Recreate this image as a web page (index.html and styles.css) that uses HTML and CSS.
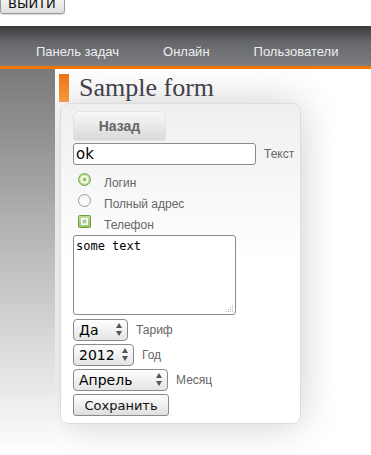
FILE: index.html
```html
<!DOCTYPE html>
<html lang="ru">
<head>
<meta charset="utf-8">
<title>Sample form</title>
<link rel="stylesheet" href="styles.css">
</head>
<body>
<div class="top"><button class="logout" type="button">ВЫЙТИ</button></div>
<nav class="nav">
  <a class="nav-item">Панель задач</a>
  <a class="nav-item">Онлайн</a>
  <a class="nav-item">Пользователи</a>
</nav>
<div class="content">
  <aside class="side"></aside>
  <main class="main">
    <h1 class="title"><span class="marker"></span><span class="title-text">Sample form</span></h1>
    <form class="panel">
      <button class="back" type="button">Назад</button>
      <div class="row"><input class="text" type="text" value="ok"><label class="lbl">Текст</label></div>
      <div class="opts">
        <div class="opt">
          <svg class="ico" width="13" height="13" viewBox="0 0 13 13"><circle cx="6.5" cy="6.5" r="6" fill="#b4d78c" stroke="#7fa85a"/><circle cx="6.5" cy="6.5" r="3.4" fill="#e3f2d3" stroke="#fbfff6" stroke-width="1.3"/><circle cx="6.5" cy="6.5" r="1.7" fill="#8fc060"/></svg>
          <span class="olbl">Логин</span>
        </div>
        <div class="opt">
          <svg class="ico" width="13" height="13" viewBox="0 0 13 13"><defs><linearGradient id="rg" x1="0" y1="0" x2="0" y2="1"><stop offset="0" stop-color="#f4f4f4"/><stop offset="1" stop-color="#ffffff"/></linearGradient></defs><circle cx="6.5" cy="6.5" r="6" fill="url(#rg)" stroke="#9a9a9a"/></svg>
          <span class="olbl">Полный адрес</span>
        </div>
        <div class="opt">
          <svg class="ico" width="13" height="13" viewBox="0 0 13 13"><defs><linearGradient id="cg" x1="0" y1="0" x2="0" y2="1"><stop offset="0" stop-color="#bfe09c"/><stop offset="1" stop-color="#95c667"/></linearGradient></defs><rect x="0.5" y="0.5" width="12" height="12" rx="1" fill="url(#cg)" stroke="#719c47"/><rect x="3.5" y="3.5" width="6" height="6" fill="#f4faee" stroke="#ffffff"/><path d="M4.8 4.8 L8.2 8.2 M8.2 4.8 L4.8 8.2" stroke="#9aa88c" stroke-width="1.2"/></svg>
          <span class="olbl">Телефон</span>
        </div>
      </div>
      <div class="ta-wrap">
        <textarea class="ta">some text</textarea>
        <svg class="grip" width="9" height="9" viewBox="0 0 9 9"><g fill="#b8b8b8"><rect x="7" y="1" width="1" height="1"/><rect x="5" y="3" width="1" height="1"/><rect x="7" y="3" width="1" height="1"/><rect x="3" y="5" width="1" height="1"/><rect x="5" y="5" width="1" height="1"/><rect x="7" y="5" width="1" height="1"/><rect x="1" y="7" width="1" height="1"/><rect x="3" y="7" width="1" height="1"/><rect x="5" y="7" width="1" height="1"/><rect x="7" y="7" width="1" height="1"/></g></svg>
      </div>
      <div class="row srow">
        <span class="sel sel-yes"><select class="sel-box"><option>Да</option></select><svg class="arr" width="6" height="13" viewBox="0 0 6 13"><path d="M0 5 L3 0 L6 5 Z M0 8 L3 13 L6 8 Z" fill="#555"/></svg></span>
        <label class="lbl">Тариф</label>
      </div>
      <div class="row srow">
        <span class="sel sel-year"><select class="sel-box"><option>2012</option></select><svg class="arr" width="6" height="13" viewBox="0 0 6 13"><path d="M0 5 L3 0 L6 5 Z M0 8 L3 13 L6 8 Z" fill="#555"/></svg></span>
        <label class="lbl">Год</label>
      </div>
      <div class="row srow">
        <span class="sel sel-month"><select class="sel-box"><option>Апрель</option></select><svg class="arr" width="6" height="13" viewBox="0 0 6 13"><path d="M0 5 L3 0 L6 5 Z M0 8 L3 13 L6 8 Z" fill="#555"/></svg></span>
        <label class="lbl">Месяц</label>
      </div>
      <button class="save" type="button">Сохранить</button>
    </form>
  </main>
</div>
</body>
</html>
```
FILE: styles.css
```css
html, body {
  margin: 0;
  padding: 0;
  background: #fff;
}
body {
  width: 371px;
  height: 455px;
  overflow: hidden;
  font-family: "Liberation Sans", Arial, sans-serif;
}
.top {
  display: flow-root;
  height: 14px;
}
.logout {
  display: block;
  margin: -8px 0 0 0;
  width: 65px;
  height: 22px;
  padding: 0 0 0 7px;
  text-align: left;
  font-family: "DejaVu Sans", sans-serif;
  font-size: 13px;
  color: #111;
  background: linear-gradient(#ffffff, #dedede);
  border: 1px solid #9a9a9a;
  border-radius: 3px;
  box-shadow: 0 1px 1px rgba(0,0,0,0.15);
}
.nav {
  margin-top: 12px;
  height: 43px;
  box-sizing: border-box;
  padding: 18px 0 0 36px;
  display: flex;
  gap: 44px;
  background: linear-gradient(#3b3b3e, #66676b 40%, #7d7e82);
  border-bottom: 3px solid #f07800;
}
.nav-item {
  font-size: 13px;
  line-height: 15px;
  color: #eeeef2;
}
.content {
  display: flex;
  height: 386px;
}
.side {
  width: 55px;
  flex: none;
  background: linear-gradient(#7a7a7a, #b8b8b8 45%, #ffffff 100%);
}
.main {
  flex: 1;
  overflow: hidden;
  background: #fff;
}
.title {
  display: flex;
  align-items: flex-start;
  margin: 5px 0 0 4px;
  height: 28px;
  font-weight: normal;
}
.marker {
  width: 10px;
  height: 28px;
  background: linear-gradient(#ee7410, #f49a40);
}
.title-text {
  margin-left: 10px;
  font-family: "Liberation Serif", "Times New Roman", serif;
  font-size: 26px;
  line-height: 28px;
  color: #41414a;
}
.panel {
  margin: 1px 0 0 5px;
  width: 241px;
  box-sizing: border-box;
  padding: 7px 12px 7px 12px;
  border: 1px solid #dcdcdc;
  border-radius: 8px;
  background: linear-gradient(#efefef, #ffffff 160px);
  box-shadow: 0 0 40px rgba(0,0,0,0.2);
}
.back {
  display: block;
  width: 93px;
  height: 30px;
  margin: 0 0 2px 0;
  padding: 0;
  font-family: "Liberation Sans", Arial, sans-serif;
  font-weight: bold;
  font-size: 14px;
  color: #666;
  background: linear-gradient(#f8f8f8, #dadada);
  border: 1px solid #e2e2e2;
  border-radius: 6px 6px 3px 3px;
}
.row {
  display: flex;
  align-items: center;
}
.text {
  width: 183px;
  height: 22px;
  box-sizing: border-box;
  margin: 0;
  padding: 0 2px;
  font-family: "DejaVu Sans", sans-serif;
  font-size: 15px;
  color: #000;
  border: 1px solid #8a8a8a;
  border-radius: 3px;
  background: #fff;
}
.lbl {
  margin-left: 8px;
  font-size: 12px;
  line-height: 14px;
  color: #666;
}
.opts {
  margin-top: 1px;
}
.opt {
  display: flex;
  align-items: flex-start;
  height: 21px;
}
.ico {
  margin: 7px 0 0 5px;
  flex: none;
}
.olbl {
  margin: 10px 0 0 13px;
  font-size: 12px;
  line-height: 14px;
  color: #666;
}
.ta-wrap {
  position: relative;
  width: 163px;
  height: 80px;
  margin: 6px 0 4px 0;
}
.ta {
  display: block;
  width: 163px;
  height: 80px;
  box-sizing: border-box;
  margin: 0;
  padding: 3px 2px;
  resize: none;
  font-family: "DejaVu Sans Mono", monospace;
  font-size: 12px;
  color: #000;
  border: 1px solid #8a8a8a;
  border-radius: 3px;
  background: #fff;
}
.grip {
  position: absolute;
  right: 2px;
  bottom: 2px;
}
.srow {
  height: 22px;
  margin-bottom: 3px;
}
.sel {
  position: relative;
  display: block;
  height: 22px;
}
.sel-yes { width: 55px; }
.sel-year { width: 61px; }
.sel-month { width: 95px; }
.sel-box {
  -webkit-appearance: none;
  appearance: none;
  display: block;
  width: 100%;
  height: 22px;
  box-sizing: border-box;
  margin: 0;
  padding: 0 0 0 5px;
  font-family: "DejaVu Sans", sans-serif;
  font-size: 14px;
  color: #000;
  border: 1px solid #8a8a8a;
  border-radius: 4px;
  background: linear-gradient(#ffffff, #e4e4e4);
}
.arr {
  position: absolute;
  right: 6px;
  top: 4px;
  pointer-events: none;
}
.save {
  display: block;
  width: 96px;
  height: 22px;
  margin: 0;
  padding: 0;
  font-family: "DejaVu Sans", sans-serif;
  font-size: 13px;
  color: #111;
  background: linear-gradient(#ffffff, #dedede);
  border: 1px solid #8a8a8a;
  border-radius: 3px;
}
```
